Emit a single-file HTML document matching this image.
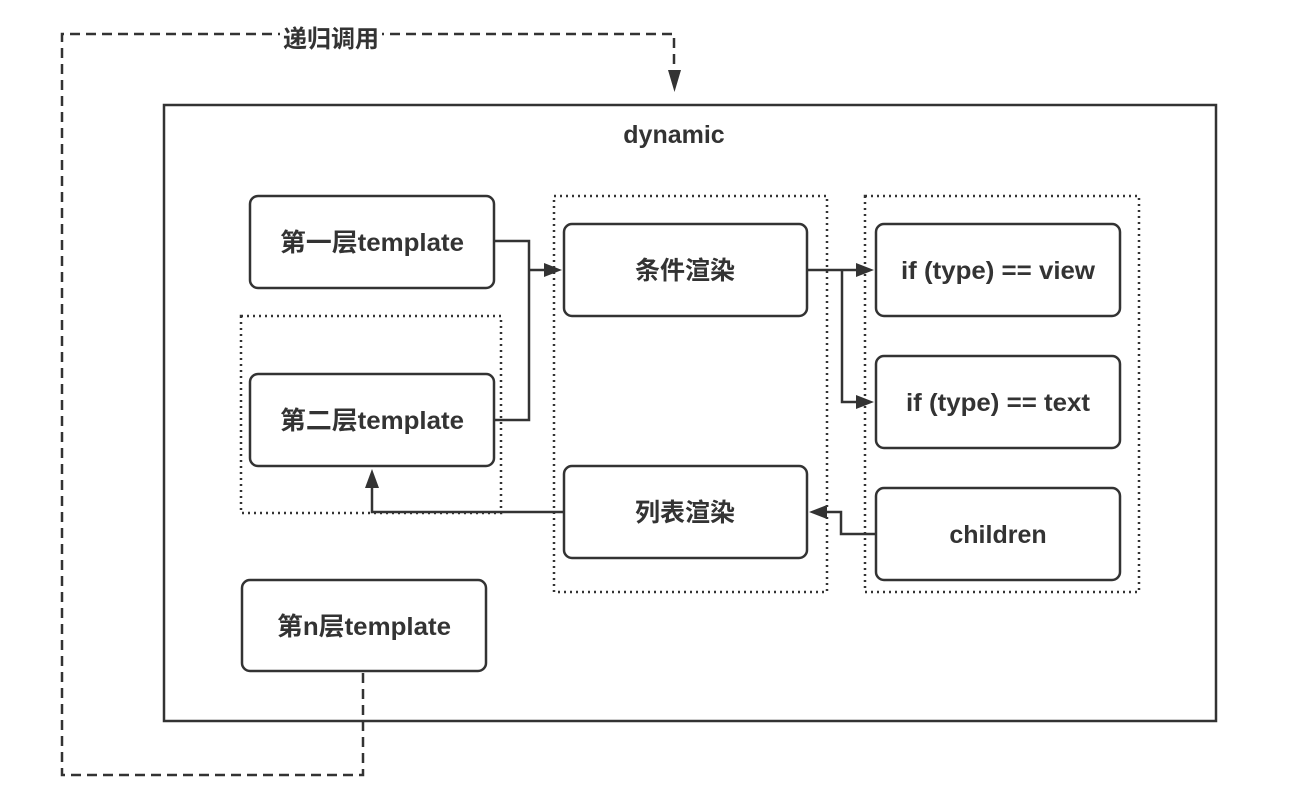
<!DOCTYPE html>
<html><head><meta charset="utf-8"><style>
html,body{margin:0;padding:0;background:#fff;width:1292px;height:793px;overflow:hidden}
text{font-family:"Liberation Sans","Noto Sans CJK SC",sans-serif;font-weight:bold;fill:#333;font-size:25px}
</style></head><body>
<svg width="1292" height="793" viewBox="0 0 1292 793" xmlns="http://www.w3.org/2000/svg">
<g fill="none" stroke="#333">
<rect x="164" y="105" width="1052" height="616" stroke-width="2.5"/>
<path d="M363 673 V775 H62 V34 H674 V70" stroke-width="2.5" stroke-dasharray="10,6"/>
<g stroke-width="2.5" stroke-dasharray="2,4">
<rect x="241" y="316" width="260" height="197"/>
<rect x="554" y="196" width="273" height="396"/>
<rect x="865" y="196" width="274" height="396"/>
</g>
<g stroke-width="2.5">
<rect x="250" y="196" width="244" height="92" rx="8"/>
<rect x="250" y="374" width="244" height="92" rx="8"/>
<rect x="242" y="580" width="244" height="91" rx="8"/>
<rect x="564" y="224" width="243" height="92" rx="8"/>
<rect x="564" y="466" width="243" height="92" rx="8"/>
<rect x="876" y="224" width="244" height="92" rx="8"/>
<rect x="876" y="356" width="244" height="92" rx="8"/>
<rect x="876" y="488" width="244" height="92" rx="8"/>
<path d="M494 241 H529 V420 H494 M529 270 H545"/>
<path d="M807 270 H858 M842 270 V402 H858"/>
<path d="M876 534 H841 V512 H826"/>
<path d="M564 512 H372 V486"/>
</g>
</g>
<g fill="#333">
<path d="M668 70 L681 70 L674.5 92 Z"/>
<path d="M544 263 L562 270 L544 277 Z"/>
<path d="M856 263 L874 270 L856 277 Z"/>
<path d="M856 395 L874 402 L856 409 Z"/>
<path d="M827 505 L809 512 L827 519 Z"/>
<path d="M365 488 L372 469 L379 488 Z"/>
</g>
<rect x="280" y="24" width="102" height="22" fill="#fff"/>
<text x="331" y="47" text-anchor="middle" style="font-size:24px">递归调用</text>
<text x="674" y="143" text-anchor="middle">dynamic</text>
<text x="372" y="251" text-anchor="middle" textLength="184" lengthAdjust="spacingAndGlyphs">第一层template</text>
<text x="372" y="429" text-anchor="middle" textLength="184" lengthAdjust="spacingAndGlyphs">第二层template</text>
<text x="364" y="635" text-anchor="middle" textLength="174" lengthAdjust="spacingAndGlyphs">第n层template</text>
<text x="685" y="279" text-anchor="middle">条件渲染</text>
<text x="685" y="521" text-anchor="middle">列表渲染</text>
<text x="998" y="279" text-anchor="middle" textLength="194" lengthAdjust="spacingAndGlyphs">if (type) == view</text>
<text x="998" y="411" text-anchor="middle" textLength="184" lengthAdjust="spacingAndGlyphs">if (type) == text</text>
<text x="998" y="543" text-anchor="middle">children</text>
</svg>
</body></html>
